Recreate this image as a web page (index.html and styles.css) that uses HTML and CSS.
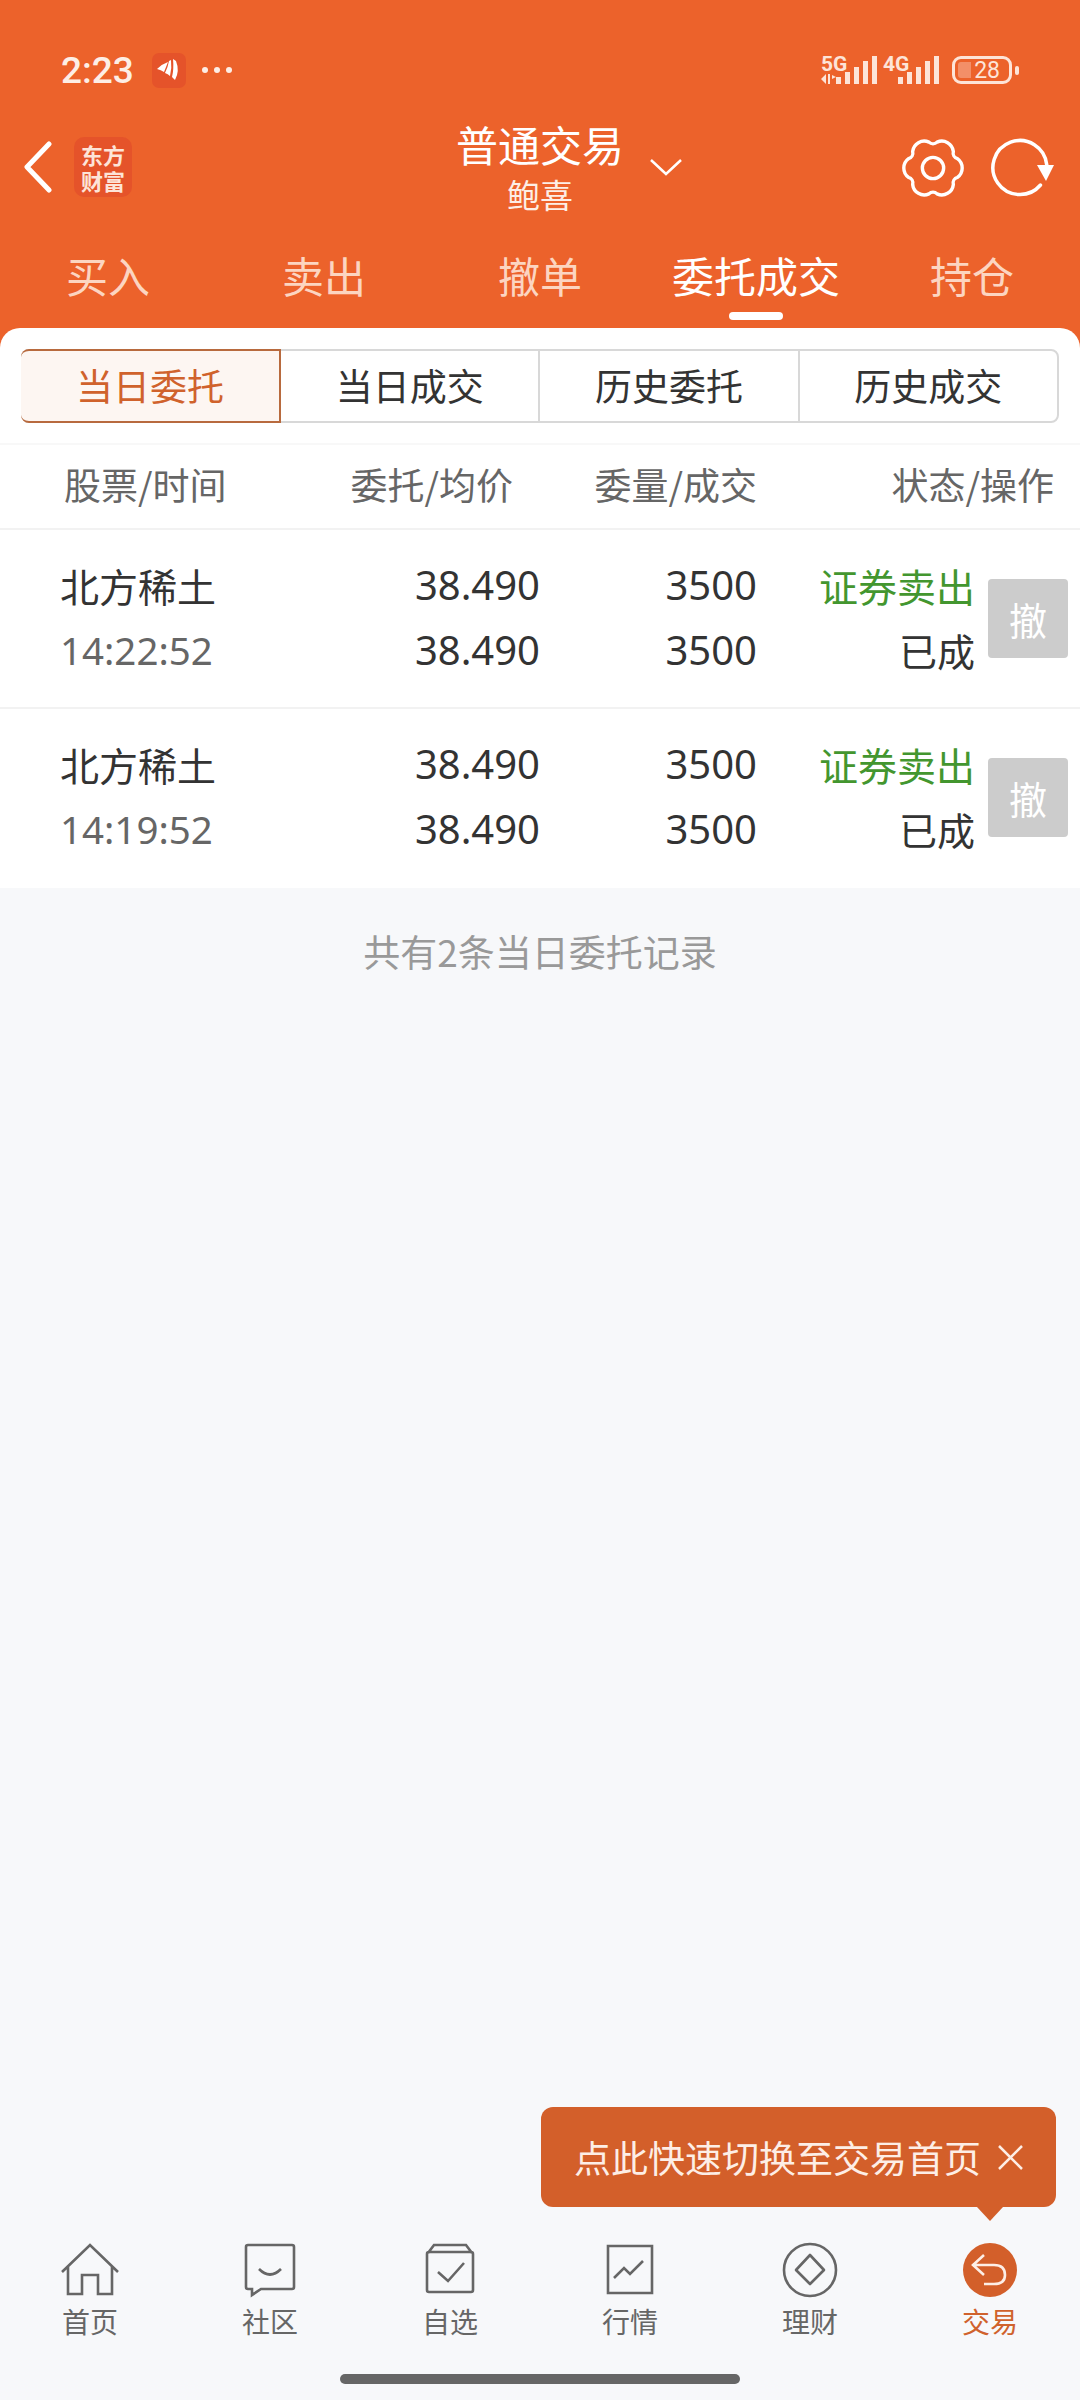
FILE: index.html
```html
<!DOCTYPE html>
<html>
<head>
    <title>普通交易</title>
    <link rel="stylesheet" href="styles.css">
</head>
<body>
    <div class="page">
        <div class="top">
            <div class="status">
                <span class="time">2:23</span>
                <span class="app-badge">
                    <svg width="24" height="24" viewBox="0 0 24 24"><path d="M0 11 Q5 6 11 4 L7 14 Q4 12 0 11Z M12 3 Q11 9 8 15 Q11 16 13 18 Q15 10 14 2Z M16 1 Q17 11 15 19 L18 22 Q23 13 19 3Z" fill="#fff"/></svg>
                </span>
                <span class="dots"><i></i><i></i><i></i></span>
                <span class="status-right">
                    <span class="net">
                        <b>5G</b>
                        <svg width="15" height="10" viewBox="0 0 15 10"><path d="M0 5 L5 0 V10Z M7 0 H9 V10 H7Z M11 1 L15 3 L11 5Z" fill="#fde4d8"/></svg>
                    </span>
                    <svg width="41" height="28" viewBox="0 0 41 28"><path d="M0 21h5v7H0z M9 16h5v12H9z M18 11h5v17h-5z M27 5h5v23h-5z M36 0h5v28h-5z" fill="#fde4d8"/></svg>
                    <span class="net net-4g"><b>4G</b></span>
                    <svg width="41" height="28" viewBox="0 0 41 28"><path d="M0 21h5v7H0z M9 16h5v12H9z M18 11h5v17h-5z M27 5h5v23h-5z M36 0h5v28h-5z" fill="#fde4d8"/></svg>
                    <span class="battery"><span class="battery-fill"></span><span class="battery-num">28</span></span>
                    <span class="battery-tip"></span>
                </span>
            </div>

            <div class="nav">
                <div class="nav-left">
                    <svg width="32" height="52" viewBox="0 0 32 52"><path d="M27 3 L5 26 L27 49" fill="none" stroke="#fff" stroke-width="5" stroke-linecap="round" stroke-linejoin="round"/></svg>
                    <span class="logo">东方<br>财富</span>
                </div>
                <div class="nav-title">
                    <div class="title">普通交易</div>
                    <div class="subtitle">鲍喜</div>
                </div>
                <svg class="chevron" width="34" height="20" viewBox="0 0 34 20"><path d="M2 3 L17 17 L32 3" fill="none" stroke="#fff" stroke-width="2.5"/></svg>
                <div class="nav-right">
                    <svg width="62" height="62" viewBox="-2 -2 64 64"><path d="M34.2 3.3 A12 12 0 0 1 51 13 A6 6 0 0 0 55.2 20.3 A12 12 0 0 1 55.2 39.7 A6 6 0 0 0 51 47 A12 12 0 0 1 34.2 56.7 A6 6 0 0 0 25.8 56.7 A12 12 0 0 1 9 47 A6 6 0 0 0 4.8 39.7 A12 12 0 0 1 4.8 20.3 A6 6 0 0 0 9 13 A12 12 0 0 1 25.8 3.3 A6 6 0 0 0 34.2 3.3Z" fill="none" stroke="#fff" stroke-width="3.5" stroke-linejoin="round"/><circle cx="30" cy="30" r="11" fill="none" stroke="#fff" stroke-width="3.5"/></svg>
                    <svg width="66" height="62" viewBox="0 0 66 62"><path d="M56.8 28 A27 27 0 1 0 50.5 48" fill="none" stroke="#fff" stroke-width="3.5" stroke-linecap="round"/><path d="M47 28 H64 L56 44Z" fill="#fff"/></svg>
                </div>
            </div>

            <div class="tabs">
                <div class="tab">买入</div>
                <div class="tab">卖出</div>
                <div class="tab">撤单</div>
                <div class="tab tab-on">委托成交</div>
                <div class="tab">持仓</div>
            </div>
        </div>

        <div class="sheet">
            <div class="seg-wrap">
                <div class="seg">
                    <div class="seg-item seg-on">当日委托</div>
                    <div class="seg-item">当日成交</div>
                    <div class="seg-item">历史委托</div>
                    <div class="seg-item">历史成交</div>
                </div>
            </div>
            <div class="thead">
                <span class="c1">股票/时间</span>
                <span class="c2">委托/均价</span>
                <span class="c3">委量/成交</span>
                <span class="c4">状态/操作</span>
            </div>
            <div class="row">
                <div class="cols">
                    <div class="c1 name">北方稀土</div>
                    <div class="c2">38.490</div>
                    <div class="c3">3500</div>
                    <div class="c4 green">证券卖出</div>
                    <div class="c1 sub">14:22:52</div>
                    <div class="c2">38.490</div>
                    <div class="c3">3500</div>
                    <div class="c4 state">已成</div>
                </div>
                <div class="cancel">撤</div>
            </div>
            <div class="row">
                <div class="cols">
                    <div class="c1 name">北方稀土</div>
                    <div class="c2">38.490</div>
                    <div class="c3">3500</div>
                    <div class="c4 green">证券卖出</div>
                    <div class="c1 sub">14:19:52</div>
                    <div class="c2">38.490</div>
                    <div class="c3">3500</div>
                    <div class="c4 state">已成</div>
                </div>
                <div class="cancel">撤</div>
            </div>
        </div>

        <div class="empty">
            <div class="count">共有2条当日委托记录</div>
        </div>

        <div class="tip">
            <span>点此快速切换至交易首页</span>
            <svg width="27" height="27" viewBox="0 0 27 27"><path d="M2 2 L25 25 M25 2 L2 25" stroke="#fdeee6" stroke-width="2.5"/></svg>
        </div>

        <div class="bottom">
            <div class="bottom-item">
                <svg width="60" height="54" viewBox="0 0 60 54"><path d="M2 29 L30 2 L58 29 M8 24 V51 H22 V32 H38 V51 H52 V24" fill="none" stroke="#666" stroke-width="2.6"/></svg>
                <span>首页</span>
            </div>
            <div class="bottom-item">
                <svg width="60" height="54" viewBox="0 0 60 54"><path d="M8 2 H52 Q54 2 54 4 V44 Q54 46 52 46 H21 L12 52 V46 H8 Q6 46 6 44 V4 Q6 2 8 2Z M19 26 Q30 37 41 26" fill="none" stroke="#666" stroke-width="2.6"/></svg>
                <span>社区</span>
            </div>
            <div class="bottom-item">
                <svg width="60" height="54" viewBox="0 0 60 54"><path d="M8 10 L14 2 H46 L52 10 M9 9 H51 Q53 9 53 11 V47 Q53 49 51 49 H9 Q7 49 7 47 V11 Q7 9 9 9Z M18 29 L28 38 L44 20" fill="none" stroke="#666" stroke-width="2.6"/></svg>
                <span>自选</span>
            </div>
            <div class="bottom-item">
                <svg width="60" height="54" viewBox="0 0 60 54"><path d="M8 3 H52 V50 H8Z M14 35 L24 25 L30 31 L43 18" fill="none" stroke="#666" stroke-width="2.6"/></svg>
                <span>行情</span>
            </div>
            <div class="bottom-item">
                <svg width="60" height="54" viewBox="0 2 60 54"><circle cx="30" cy="29" r="26" fill="none" stroke="#666" stroke-width="2.6"/><path d="M30 14 L44 29 L30 43 L16 29Z" fill="none" stroke="#666" stroke-width="2.6" stroke-linejoin="round"/></svg>
                <span>理财</span>
            </div>
            <div class="bottom-item bottom-on">
                <svg width="60" height="54" viewBox="0 2 60 54"><circle cx="30" cy="29" r="27" fill="#d35f2a"/><path d="M24 14 L13 24 L24 34 M13 24 H34 Q45 24 45 34 Q45 43 34 43 H24" fill="none" stroke="#fdeee6" stroke-width="2.6"/></svg>
                <span>交易</span>
            </div>
        </div>
        <div class="homebar"></div>
    </div>
</body>
</html>
```

FILE: styles.css
```css
*{
    box-sizing: border-box;
}
body{
    margin: 0;
    background-color: #f7f8fa;
    font-family: "Noto Sans CJK SC", "Noto Sans", sans-serif;
    color: #333;
}
.page{
    position: relative;
    width: 1080px;
    height: 2400px;
    display: flex;
    flex-direction: column;
    overflow: hidden;
}
.top{
    background-color: #ec622b;
    height: 348px;
    margin-bottom: -20px;
    color: #fff;
}
.status{
    height: 60px;
    margin-top: 40px;
    padding: 0 0 0 61px;
    display: flex;
    align-items: center;
}
.time{
    font-family: Roboto, sans-serif;
    font-size: 37px;
    font-weight: 500;
    color: #fdeee6;
    width: 91px;
}
.app-badge{
    width: 34px;
    height: 35px;
    border-radius: 7px;
    background-color: #e5532a;
    display: flex;
    align-items: center;
    justify-content: center;
}
.dots{
    display: flex;
    gap: 6px;
    margin-left: 16px;
}
.dots i{
    width: 6px;
    height: 6px;
    border-radius: 50%;
    background-color: #fdeee6;
}
.status-right{
    margin-left: auto;
    margin-right: 61px;
    display: flex;
    align-items: flex-end;
    height: 28px;
}
.net{
    width: 15px;
    height: 28px;
    display: flex;
    flex-direction: column;
    justify-content: space-between;
    color: #fde4d8;
}
.net b{
    font-family: Roboto, sans-serif;
    font-size: 21px;
    line-height: 16px;
    white-space: nowrap;
}
.net-4g{
    margin-left: 6px;
}
.battery{
    position: relative;
    width: 60px;
    height: 28px;
    margin-left: 13px;
    border: 3px solid #fde4d8;
    border-radius: 9px;
    display: flex;
    align-items: center;
    justify-content: flex-end;
    padding-right: 9px;
}
.battery-fill{
    position: absolute;
    left: 3px;
    top: 3px;
    bottom: 3px;
    width: 13px;
    border-radius: 3px 0 0 3px;
    background-color: #f38f68;
}
.battery-num{
    position: relative;
    font-family: Roboto, sans-serif;
    font-size: 23px;
    color: #fde4d8;
}
.battery-tip{
    width: 4px;
    height: 9px;
    margin: 0 0 9px 3px;
    background-color: #fde4d8;
    border-radius: 2px;
}
.nav{
    position: relative;
    height: 100px;
    margin-top: 17px;
    display: flex;
    align-items: center;
    justify-content: center;
}
.nav-left{
    position: absolute;
    left: 22px;
    top: 20px;
    display: flex;
    align-items: center;
    gap: 20px;
}
.logo{
    width: 58px;
    height: 60px;
    border-radius: 10px;
    background-color: #e5532a;
    color: #fde4d8;
    font-family: "Noto Sans CJK SC", sans-serif;
    font-weight: 700;
    font-size: 22px;
    line-height: 26px;
    text-align: center;
    padding-top: 4px;
}
.nav-title{
    text-align: center;
}
.title{
    font-size: 42px;
    line-height: 54px;
}
.subtitle{
    font-size: 33px;
    line-height: 46px;
    color: #fdeee6;
}
.chevron{
    position: absolute;
    left: 649px;
    top: 40px;
}
.nav-right{
    position: absolute;
    left: 902px;
    top: 20px;
    display: flex;
    gap: 26px;
}
.tabs{
    display: flex;
    height: 111px;
}
.tab{
    position: relative;
    flex: 1;
    text-align: center;
    font-size: 42px;
    line-height: 70px;
    padding-top: 23px;
    color: #fcd5c1;
}
.tab-on{
    color: #fff;
}
.tab-on:after{
    content: "";
    position: absolute;
    left: 81px;
    bottom: 8px;
    width: 54px;
    height: 8px;
    border-radius: 4px;
    background-color: #fff;
}
.sheet{
    position: relative;
    background-color: #fff;
    border-radius: 20px 20px 0 0;
}
.seg-wrap{
    padding: 21px 21px 20px 21px;
    border-bottom: 2px solid #f8f8f8;
}
.seg{
    display: flex;
    height: 74px;
    border: 2px solid #d8d8d8;
    border-radius: 8px;
}
.seg-item{
    flex: 1;
    display: flex;
    align-items: center;
    justify-content: center;
    font-size: 37px;
    padding-bottom: 2px;
    border-left: 2px solid #d8d8d8;
}
.seg-item:first-child{
    border-left: none;
}
.seg-on{
    margin: -2px 0 -2px -2px;
    flex: 0 0 260px;
    border: 2px solid #b86a3e;
    border-radius: 8px 0 0 8px;
    background-color: #fdf6f2;
    color: #d0622c;
}
.seg-on + .seg-item{
    border-left: none;
}
.thead{
    display: grid;
    grid-template-columns: 283px 230px 244px 297px;
    height: 85px;
    align-items: center;
    padding-bottom: 6px;
    font-size: 37px;
    color: #666;
    border-bottom: 2px solid #f2f2f2;
}
.c1{
    padding-left: 64px;
}
.c2, .c3, .c4{
    text-align: right;
}
.row{
    position: relative;
    height: 179px;
    padding-top: 22px;
    border-bottom: 2px solid #f2f2f2;
}
.row:last-child{
    border-bottom: none;
}
.cols{
    display: grid;
    grid-template-columns: 283px 257px 217px 218px;
    grid-auto-rows: 65px;
    align-items: center;
    font-size: 40px;
    font-family: "Noto Sans", "Noto Sans CJK SC", sans-serif;
}
.cols .name{
    padding-left: 60px;
    font-family: "Noto Sans CJK SC", sans-serif;
    font-size: 39px;
}
.cols .sub{
    padding-left: 60px;
    color: #666;
    font-size: 38.5px;
}
.green{
    color: #43962f;
    font-family: "Noto Sans CJK SC", sans-serif;
    font-size: 39px;
}
.state{
    font-size: 38px;
}
.cancel{
    position: absolute;
    left: 988px;
    top: 49px;
    width: 80px;
    height: 79px;
    border-radius: 4px;
    background-color: #cccccc;
    color: #fff;
    font-size: 38px;
    display: flex;
    align-items: center;
    justify-content: center;
}
.empty{
    flex: 1;
}
.count{
    margin-top: 36px;
    text-align: center;
    font-size: 37px;
    color: #999;
}
.tip{
    position: absolute;
    left: 541px;
    top: 2107px;
    width: 515px;
    height: 100px;
    border-radius: 12px;
    background-color: #d35f2a;
    color: #fdeee6;
    font-size: 37px;
    display: flex;
    align-items: center;
    justify-content: space-between;
    padding: 0 32px 0 33px;
}
.tip:after{
    content: "";
    position: absolute;
    left: 436px;
    top: 100px;
    border-left: 13px solid transparent;
    border-right: 13px solid transparent;
    border-top: 14px solid #d35f2a;
}
.bottom{
    display: flex;
    height: 116px;
    margin-bottom: 59px;
}
.bottom-item{
    flex: 1;
    display: flex;
    flex-direction: column;
    align-items: center;
    justify-content: flex-end;
    font-size: 28px;
    line-height: 40px;
    color: #666;
}
.bottom-item svg{
    margin-bottom: 4px;
    overflow: visible;
}
.bottom-on{
    color: #d0622c;
}
.homebar{
    position: absolute;
    left: 340px;
    top: 2374px;
    width: 400px;
    height: 10px;
    border-radius: 5px;
    background-color: #666;
}
```
